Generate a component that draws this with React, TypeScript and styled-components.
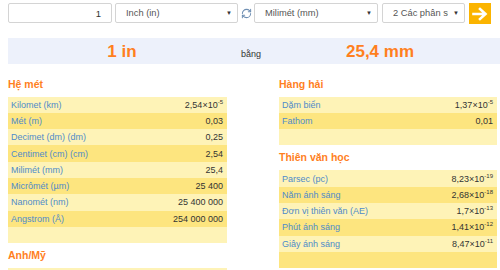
import React from "react";
import styled, { createGlobalStyle } from "styled-components";
import { RefreshCw } from "lucide-react";

const GlobalStyle = createGlobalStyle`
  html, body {
    margin: 0;
    padding: 0;
    background: #fff;
    overflow: hidden;
  }
  body {
    font-family: "Liberation Sans", Arial, sans-serif;
    color: #333;
  }
`;

const Page = styled.div`
  width: 500px;
  height: 270px;
  padding: 3px 0 0 8px;
  box-sizing: border-box;
  overflow: hidden;
`;

const Toolbar = styled.div`
  display: flex;
  align-items: flex-start;
  height: 21px;
`;

const NumberBox = styled.div`
  width: 104px;
  height: 20px;
  box-sizing: border-box;
  border: 1px solid #d4d4d4;
  border-radius: 2px;
  padding-right: 10px;
  display: flex;
  align-items: center;
  justify-content: flex-end;
  font-size: 9.5px;
  color: #333;
`;

const SelectBox = styled.div<{ $w: number; $ml: number }>`
  width: ${(p) => p.$w}px;
  margin-left: ${(p) => p.$ml}px;
  height: 20px;
  box-sizing: border-box;
  border: 1px solid #d4d4d4;
  border-radius: 2px;
  padding: 0 5px 0 10px;
  display: flex;
  align-items: center;
  justify-content: space-between;
  font-size: 9.3px;
  color: #555;
`;

const SelectText = styled.span<{ $max?: number }>`
  display: block;
  flex: 0 1 auto;
  white-space: nowrap;
  overflow: hidden;
  text-overflow: clip;
  max-width: ${(p) => (p.$max ? `${p.$max}px` : "none")};
`;

const Caret = styled.span`
  flex: 0 0 auto;
  font-size: 6px;
  color: #333;
`;

const Swap = styled.div`
  width: 16px;
  height: 20px;
  display: flex;
  align-items: center;
  justify-content: center;
  color: #6f8fb3;
`;

const GoButton = styled.div`
  width: 22px;
  height: 21px;
  margin-left: 4px;
  background: #fbb400;
  display: flex;
  align-items: center;
  justify-content: center;
`;

const Band = styled.div`
  margin-top: 14px;
  height: 26px;
  background: #edf1fb;
  display: grid;
  grid-template-columns: 228px 30px 228px;
  align-items: baseline;
  padding-top: 4px;
  box-sizing: border-box;
`;

const BigValue = styled.span`
  text-align: center;
  font-size: 17px;
  font-weight: bold;
  color: #ff7f1e;
`;

const Equals = styled.span`
  text-align: center;
  font-size: 9px;
  color: #333;
`;

const Columns = styled.div`
  display: grid;
  grid-template-columns: 219px 218px;
  column-gap: 52px;
  margin-top: 7.5px;
`;

const Column = styled.div`
  display: flex;
  flex-direction: column;
`;

const Heading = styled.div`
  margin: 6px 0 6px;
  height: 13px;
  line-height: 13px;
  font-size: 10.5px;
  font-weight: bold;
  color: #ff7f1e;
`;

const Table = styled.div`
  display: flex;
  flex-direction: column;
`;

const Row = styled.div<{ $dark: boolean }>`
  height: 16.3px;
  display: flex;
  align-items: center;
  justify-content: space-between;
  padding: 0 4px 0 3px;
  background: ${(p) => (p.$dark ? "#fde57f" : "#fef3b7")};
  font-size: 9px;
`;

const Label = styled.span`
  color: #4f8bc9;
`;

const Value = styled.span`
  color: #333;
  white-space: nowrap;
  sup {
    font-size: 6px;
    line-height: 0;
  }
`;

type Item = { label: string; value: string; exp?: string };

const sections: { title: string; items: Item[] }[][] = [
  [
    {
      title: "Hệ mét",
      items: [
        { label: "Kilomet (km)", value: "2,54×10", exp: "-5" },
        { label: "Mét (m)", value: "0,03" },
        { label: "Decimet (dm) (dm)", value: "0,25" },
        { label: "Centimet (cm) (cm)", value: "2,54" },
        { label: "Milimét (mm)", value: "25,4" },
        { label: "Micrômét (µm)", value: "25 400" },
        { label: "Nanomét (nm)", value: "25 400 000" },
        { label: "Angstrom (Å)", value: "254 000 000" },
      ],
    },
    {
      title: "Anh/Mỹ",
      items: [
        { label: "Inch (in)", value: "1" },
        { label: "Foot (ft)", value: "0,08" },
      ],
    },
  ],
  [
    {
      title: "Hàng hải",
      items: [
        { label: "Dặm biển", value: "1,37×10", exp: "-5" },
        { label: "Fathom", value: "0,01" },
      ],
    },
    {
      title: "Thiên văn học",
      items: [
        { label: "Parsec (pc)", value: "8,23×10", exp: "-19" },
        { label: "Năm ánh sáng", value: "2,68×10", exp: "-18" },
        { label: "Đơn vị thiên văn (AE)", value: "1,7×10", exp: "-13" },
        { label: "Phút ánh sáng", value: "1,41×10", exp: "-12" },
        { label: "Giây ánh sáng", value: "8,47×10", exp: "-11" },
      ],
    },
  ],
];

function Arrow() {
  return (
    <svg width="16" height="14" viewBox="0 0 16 14">
      <path
        d="M1.5 7 H13 M8 2 L13.5 7 L8 12"
        fill="none"
        stroke="#fff"
        strokeWidth="2.6"
        strokeLinecap="square"
      />
    </svg>
  );
}

export default function App() {
  return (
    <>
      <GlobalStyle />
      <Page>
        <Toolbar>
          <NumberBox>1</NumberBox>
          <SelectBox $w={123} $ml={3}>
            <SelectText>Inch (in)</SelectText>
            <Caret>▼</Caret>
          </SelectBox>
          <Swap>
            <RefreshCw size={11} strokeWidth={2.2} />
          </Swap>
          <SelectBox $w={124} $ml={0}>
            <SelectText>Milimét (mm)</SelectText>
            <Caret>▼</Caret>
          </SelectBox>
          <SelectBox $w={83} $ml={4}>
            <SelectText $max={55}>2 Các phân số</SelectText>
            <Caret>▼</Caret>
          </SelectBox>
          <GoButton>
            <Arrow />
          </GoButton>
        </Toolbar>

        <Band>
          <BigValue>1 in</BigValue>
          <Equals>bằng</Equals>
          <BigValue>25,4 mm</BigValue>
        </Band>

        <Columns>
          {sections.map((col, ci) => (
            <Column key={ci}>
              {col.map((sec) => (
                <div key={sec.title}>
                  <Heading>{sec.title}</Heading>
                  <Table>
                    {sec.items.map((it, i) => (
                      <Row key={it.label} $dark={i % 2 === 1}>
                        <Label>{it.label}</Label>
                        <Value>
                          {it.value}
                          {it.exp && <sup>{it.exp}</sup>}
                        </Value>
                      </Row>
                    ))}
                    <Row $dark={sec.items.length % 2 === 1}>
                      <Label>&nbsp;</Label>
                    </Row>
                  </Table>
                </div>
              ))}
            </Column>
          ))}
        </Columns>
      </Page>
    </>
  );
}
